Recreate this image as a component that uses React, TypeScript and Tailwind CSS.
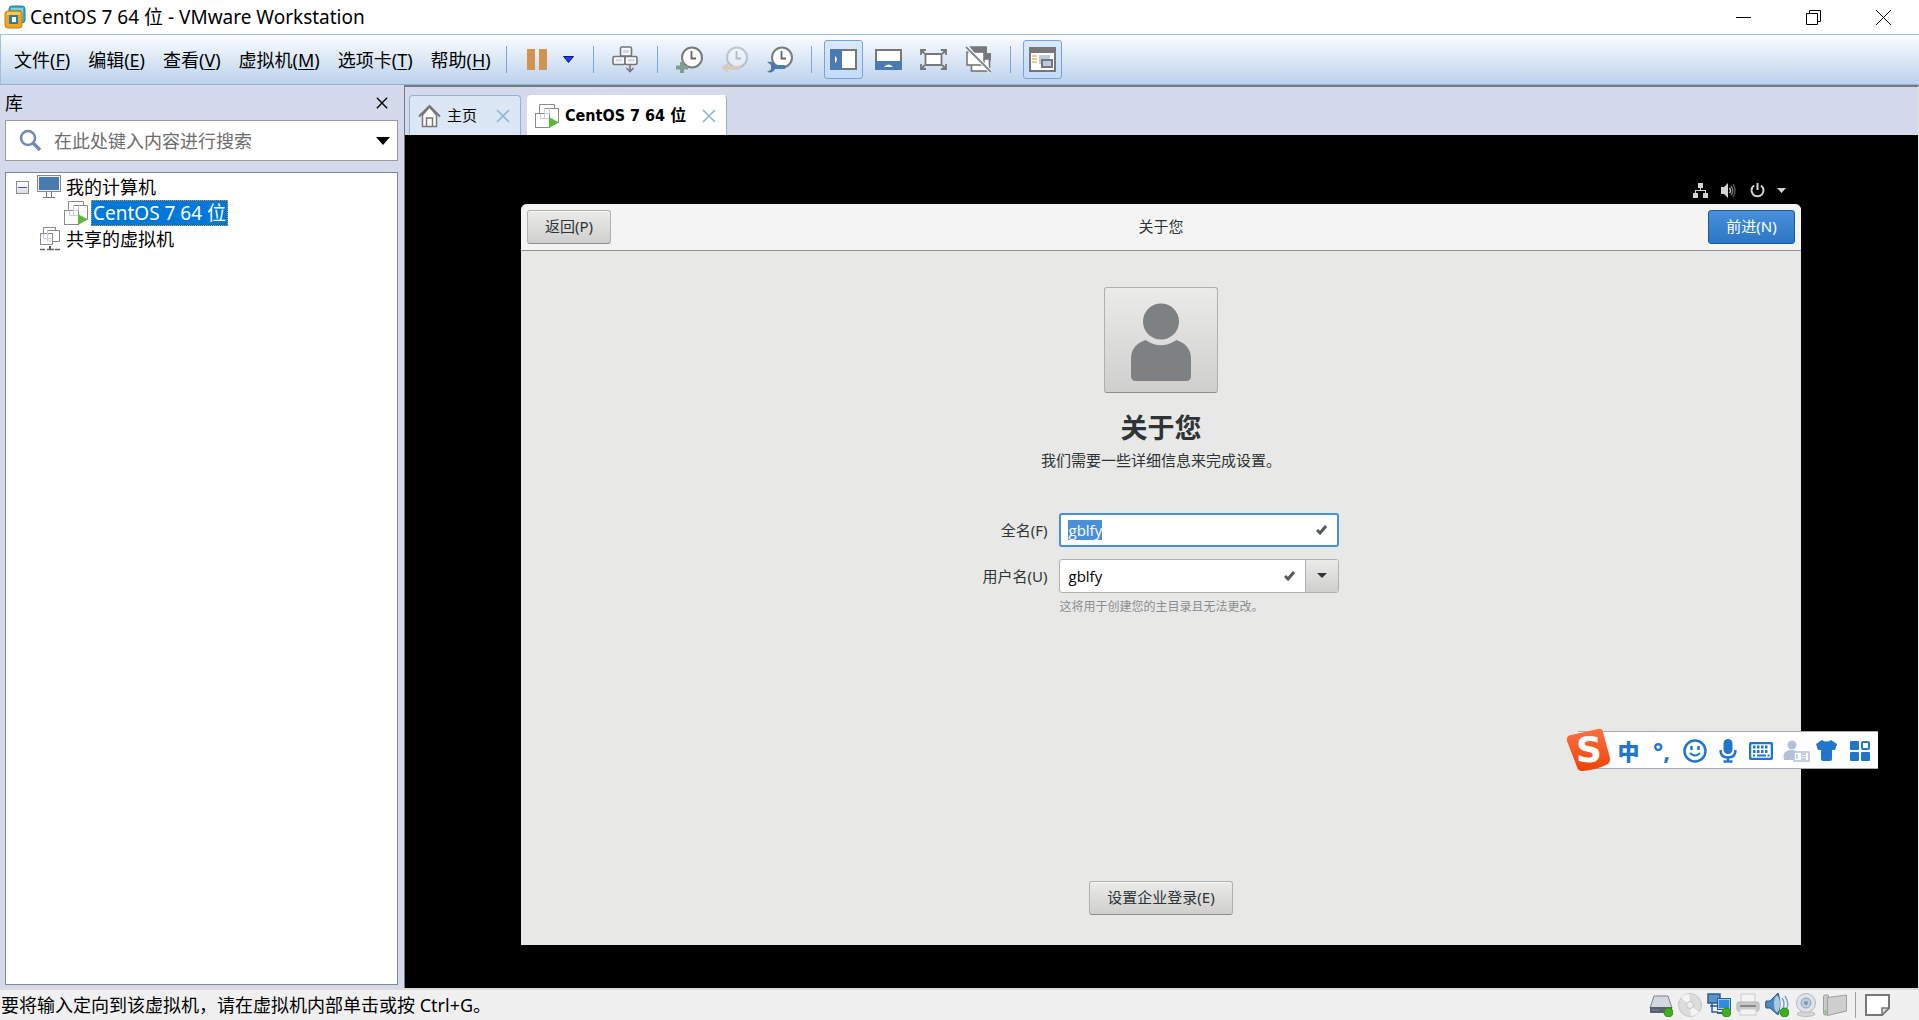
import { useEffect, useRef, useState } from 'react'
import type { ReactNode } from 'react'

interface MenuItem {
  label: string
  hotkey: string
}

const MENUS: MenuItem[] = [
  { label: '文件', hotkey: 'F' },
  { label: '编辑', hotkey: 'E' },
  { label: '查看', hotkey: 'V' },
  { label: '虚拟机', hotkey: 'M' },
  { label: '选项卡', hotkey: 'T' },
  { label: '帮助', hotkey: 'H' },
]

const guestButton =
  'h-[34px] rounded-[3px] border border-[#b0b0ac] border-b-[#8e8e8a] bg-linear-to-b from-[#ebebea] to-[#cfcfcd] pb-[2px] text-[15px] text-[#2e3436] shadow-[inset_0_1px_0_#f8f8f7]'

function AppLogo() {
  return (
    <svg width="22" height="24" viewBox="0 0 22 24">
      <rect x="5" y="1" width="16" height="17" rx="3" fill="#3fa9bf" stroke="#277f97" />
      <path d="M7 4h11v11" fill="none" stroke="#7fd0dd" strokeWidth="2" />
      <rect x="1" y="6" width="17" height="17" rx="3" fill="#f2a61f" stroke="#c97a10" />
      <rect x="3" y="7" width="13" height="3" fill="#fbc64a" />
      <rect x="5" y="10" width="9" height="9" fill="#2c7ea0" />
      <rect x="8" y="12" width="4" height="5" fill="#fff" />
    </svg>
  )
}

function VmStackIcon({ running = false }: { running?: boolean }) {
  return (
    <svg width="24" height="24" viewBox="0 0 24 24" fill="none" className="shrink-0">
      <path d="M4.500 9V.5h15v4M9.500 4.500h14v14h-8" stroke="#8a8a8a" />
      <rect x=".5" y="9.500" width="14" height="14" stroke="#8a8a8a" />
      <path d="M5.500 10v4.500h9M9.500 4.500v10M9.500 9.500h5M14.500 9.500v-5" stroke="#c6cfe4" />
      {running && <path d="M14 13v11l10-5.500z" fill="#5cb83c" />}
    </svg>
  )
}

function SharedIcon() {
  return (
    <svg width="20" height="24" viewBox="0 0 20 24" fill="none" className="shrink-0">
      <path d="M3.500 6.500v-6h12v3M7.500 3.500h12v11h-7" stroke="#8a8a8a" />
      <rect x=".5" y="6.500" width="12" height="11" stroke="#8a8a8a" />
      <path d="M3.500 7v4.500h9M7.500 4v10h5" stroke="#c6cfe4" />
      <path d="M10 19v3" stroke="#555" strokeWidth="2" />
      <path d="M0 22.500h5M7 22.500h7M15 22.500h5" stroke="#666" strokeWidth="1.500" />
    </svg>
  )
}

function MonitorIcon() {
  return (
    <svg width="24" height="24" viewBox="0 0 24 24" className="shrink-0">
      <rect x=".5" y=".5" width="23" height="16" fill="#eee" stroke="#8a8a8a" />
      <rect x="2" y="2" width="20" height="13" fill="#4a7bb0" />
      <path d="M9.500 17v5M14.500 17v5M6 22.500h12" stroke="#777" fill="none" />
    </svg>
  )
}

function HomeIcon() {
  return (
    <svg width="23" height="24" viewBox="0 0 23 24" fill="none">
      <path d="M4.500 11v11.500h14V11l-7-8z" fill="#fff" stroke="#777" strokeWidth="1.500" />
      <path d="M1 12.500L11.500 2 22 12.500" stroke="#777" strokeWidth="2" />
      <path d="M8.500 22v-8h6v8" stroke="#777" strokeWidth="1.500" />
    </svg>
  )
}

function CrossIcon({ size, color }: { size: number; color: string }) {
  return (
    <svg width={size} height={size} viewBox="0 0 14 14" stroke={color} strokeWidth="1.600">
      <path d="M1 1l12 12M13 1L1 13" />
    </svg>
  )
}

function Clock({ children, faded = false }: { children: ReactNode; faded?: boolean }) {
  return (
    <svg width="27" height="27" viewBox="0 0 27 27" fill="none">
      <g opacity={faded ? 0.35 : 1}>
        <circle cx="16" cy="11.500" r="10" fill="#fdfdfd" stroke="#7b7b7b" strokeWidth="2" />
        <path d="M15.500 5v7.500H20" stroke="#666" strokeWidth="1.800" />
      </g>
      {children}
    </svg>
  )
}

function CtrlAltDelIcon() {
  return (
    <svg width="26" height="27" viewBox="0 0 26 27" fill="none" stroke="#777" strokeWidth="1.600">
      <rect x="8.500" y="1" width="11" height="9" rx="1.500" fill="#f8f8f8" />
      <rect x="1" y="10.500" width="12" height="8" rx="1.500" fill="#f8f8f8" />
      <rect x="13" y="10.500" width="12" height="8" rx="1.500" fill="#f8f8f8" />
      <path d="M11 4h6v3h-6zM4 13h6v2.500H4zM16 13h6v2.500h-6z" fill="#c9d8ec" stroke="none" />
      <path d="M18 19v6M14.500 22l3.500 3.500 3.500-3.500" />
    </svg>
  )
}

function SidebarViewIcon() {
  return (
    <svg width="27" height="22" viewBox="0 0 27 22">
      <rect x="1" y="1" width="25" height="19" fill="#fff" stroke="#777" strokeWidth="2" />
      <rect width="12" height="21" fill="#4a7bb0" />
      <path d="M5 7q4 3.500 0 7z" fill="#fff" />
    </svg>
  )
}

function ThumbnailViewIcon() {
  return (
    <svg width="27" height="22" viewBox="0 0 27 22">
      <rect x="1" y="1" width="25" height="19" fill="#fff" stroke="#777" strokeWidth="2" />
      <rect y="12" width="27" height="9" fill="#4a7bb0" />
      <path d="M9 18q4.500-5 9 0z" fill="#fff" />
    </svg>
  )
}

function FullscreenIcon() {
  return (
    <svg width="27" height="22" viewBox="0 0 27 22" fill="none" stroke="#777" strokeWidth="1.800">
      <rect x="5.500" y="5" width="16" height="11" rx="1" fill="#fff" />
      <path d="M1 6V1h5M21 1h5v5M26 15v5h-5M6 20H1v-5M1 1l4 4M26 1l-4 4M26 20l-4-4M1 20l4-4" />
    </svg>
  )
}

function UnityIcon() {
  return (
    <svg width="27" height="27" viewBox="0 0 27 27" fill="none" stroke="#777" strokeWidth="1.600">
      <path d="M6 2h15v12M20 8h5v7" fill="none" />
      <path d="M6 1h15v5H10z" fill="#777" />
      <path d="M20 8h5v4h-5z" fill="#777" />
      <rect x="6.500" y="13" width="18" height="12" fill="#fff" />
      <rect x="2" y="6" width="17" height="13" fill="#fff" />
      <path d="M1 1l25 25" stroke="#fff" strokeWidth="4" />
      <path d="M1 1l25 25" stroke="#7f8a99" strokeWidth="2" />
    </svg>
  )
}

function ConsoleIcon() {
  return (
    <svg width="27" height="25" viewBox="0 0 27 25">
      <rect x="1" y="1" width="25" height="23" fill="#fff" stroke="#777" strokeWidth="2" />
      <rect width="27" height="6" fill="#777" />
      <path d="M3 9h5M3 12h5M3 15h5" stroke="#e3b95c" strokeWidth="1.500" />
      <rect x="10" y="8" width="11" height="9" fill="#bccbe0" />
      <rect x="13" y="13" width="10" height="7" fill="#bccbe0" stroke="#777" strokeWidth="2" />
    </svg>
  )
}

function ToolButton({ label, active = false, children }: { label: string; active?: boolean; children: ReactNode }) {
  return (
    <button
      aria-label={label}
      className={
        active
          ? 'flex size-[39px] items-center justify-center rounded-[3px] border border-[#78a3d8] bg-linear-to-b from-[#d9e9fb] to-[#c3dbfb]'
          : 'flex size-[39px] items-center justify-center'
      }
    >
      {children}
    </button>
  )
}

function Separator() {
  return <div className="h-[27px] w-px bg-[#7fa6d6]" />
}

function TitleBar() {
  return (
    <header className="flex h-[34px] shrink-0 items-center bg-white pr-px pl-1">
      <AppLogo />
      <h1 className="flex-1 pl-1 text-[19px] leading-6">CentOS 7 64 位 - VMware Workstation</h1>
      <button aria-label="最小化" className="flex h-full w-[69px] items-center justify-center">
        <svg width="15" height="15" viewBox="0 0 15 15" stroke="#000">
          <path d="M0 7.500h15" />
        </svg>
      </button>
      <button aria-label="还原" className="flex h-full w-[70px] items-center justify-center">
        <svg width="15" height="15" viewBox="0 0 15 15" stroke="#000" fill="none">
          <path d="M.5 3.500h11v11H.5zM3.500 3V.5h11v11H12" />
        </svg>
      </button>
      <button aria-label="关闭" className="flex h-full w-[70px] items-center justify-center">
        <svg width="15" height="15" viewBox="0 0 15 15" stroke="#000">
          <path d="M0 0l15 15M15 0L0 15" />
        </svg>
      </button>
    </header>
  )
}

function Toolbar() {
  return (
    <div className="flex h-[51px] shrink-0 items-center border-y border-l border-t-[#9fc0e4] border-b-[#8fb2dc] border-l-[#9fc0e4] bg-linear-to-b from-[#fbfdff] to-[#bcd2ec] pl-[13px]">
      <nav className="flex gap-[18px] text-lg leading-6 whitespace-nowrap">
        {MENUS.map((menu) => (
          <button key={menu.hotkey}>
            {menu.label}(<span className="underline underline-offset-2">{menu.hotkey}</span>)
          </button>
        ))}
      </nav>
      <div className="flex items-center pl-[15px]">
        <Separator />
        <button aria-label="挂起" className="ml-5 flex gap-1">
          <span className="h-[21px] w-2 bg-[#d3924f]" />
          <span className="h-[21px] w-2 bg-[#d3924f]" />
        </button>
        <button aria-label="电源选项" className="mx-4">
          <svg width="11" height="7" viewBox="0 0 11 7">
            <path d="M.5.500h10L5.500 6.500z" fill="#1d3df5" stroke="#0b1a70" />
          </svg>
        </button>
        <div className="ml-[3px]">
          <Separator />
        </div>
        <div className="mx-3">
          <ToolButton label="发送 Ctrl+Alt+Del">
            <CtrlAltDelIcon />
          </ToolButton>
        </div>
        <Separator />
        <div className="mx-3 flex gap-[6px]">
          <ToolButton label="拍摄快照">
            <Clock>
              <path d="M6 16v11M0 21.500h12" stroke="#7f9f8f" strokeWidth="4" />
            </Clock>
          </ToolButton>
          <ToolButton label="恢复快照">
            <Clock faded>
              <path d="M0 21.500l7-5v3.500h12v4H7v3z" fill="#d9cbbb" />
            </Clock>
          </ToolButton>
          <ToolButton label="管理快照">
            <Clock>
              <path d="M1 16q6-1.500 8 3h9q2 0 2 2t-2 2H9q-2 4.500-8 3l4-2.500v-4.500z" fill="#4a7bb0" />
            </Clock>
          </ToolButton>
        </div>
        <Separator />
        <div className="mx-3 flex gap-[6px]">
          <ToolButton label="显示库" active>
            <SidebarViewIcon />
          </ToolButton>
          <ToolButton label="显示缩略图">
            <ThumbnailViewIcon />
          </ToolButton>
          <ToolButton label="全屏">
            <FullscreenIcon />
          </ToolButton>
          <ToolButton label="Unity">
            <UnityIcon />
          </ToolButton>
        </div>
        <Separator />
        <div className="mx-3">
          <ToolButton label="控制台视图" active>
            <ConsoleIcon />
          </ToolButton>
        </div>
      </div>
    </div>
  )
}

function Library() {
  return (
    <aside className="flex w-[404px] shrink-0 flex-col bg-[#d4d9ec] pr-[6px] pb-[3px] pl-[5px]">
      <div className="flex h-[35px] items-center justify-between pr-[10px]">
        <h2 className="text-lg leading-6">库</h2>
        <button aria-label="关闭库">
          <CrossIcon size={12} color="#000" />
        </button>
      </div>
      <div className="flex h-[41px] items-center border border-[#9b9b9b] bg-white pr-[7px] pl-[13px]">
        <svg width="23" height="23" viewBox="0 0 23 23" fill="none" stroke="#7389b5">
          <circle cx="9" cy="9" r="7" strokeWidth="2.500" />
          <path d="M14 14l7 7" strokeWidth="3.500" />
        </svg>
        <input
          type="text"
          aria-label="搜索"
          placeholder="在此处键入内容进行搜索"
          className="min-w-0 flex-1 pl-3 text-lg leading-6 outline-none placeholder:text-[#6d6d6d]"
        />
        <button aria-label="搜索选项">
          <svg width="14" height="8" viewBox="0 0 14 8">
            <path d="M0 0h14L7 8z" />
          </svg>
        </button>
      </div>
      <ul className="mt-[11px] flex-1 border border-[#84878f] bg-white pt-px text-lg leading-6">
        <li className="flex h-[26px] items-center pl-[10px]">
          <button aria-label="折叠" className="flex size-[13px] items-center justify-center border border-[#8e8e8e] bg-linear-to-b from-white to-[#dcdcdc]">
            <span className="h-px w-[9px] bg-[#3b55b0]" />
          </button>
          <span className="pr-[5px] pl-2">
            <MonitorIcon />
          </span>
          我的计算机
        </li>
        <li className="flex h-[26px] items-center gap-[3px] pl-[58px]">
          <VmStackIcon running />
          <span className="h-[26px] border border-dotted border-[#f08a28] bg-[#0078d7] px-px text-[19px] text-white">CentOS 7 64 位</span>
        </li>
        <li className="flex h-[26px] items-center gap-[6px] pl-[34px]">
          <SharedIcon />
          共享的虚拟机
        </li>
      </ul>
    </aside>
  )
}

function Tabs() {
  return (
    <div className="flex h-[48px] shrink-0 items-end gap-[6px] bg-[#d4d9ec] pl-1 font-['DejaVu_Sans_Condensed','Noto_Sans_CJK_SC',sans-serif]">
      <div className="flex h-10 w-[112px] items-center rounded-t-[4px] border border-b-0 border-[#8fb3d6] bg-[#dbe7f5] pr-[10px] pl-2">
        <HomeIcon />
        <button className="flex-1 pt-px pl-[6px] text-left text-[15px]">主页</button>
        <button aria-label="关闭主页">
          <CrossIcon size={14} color="#8fb3d0" />
        </button>
      </div>
      <div className="flex h-10 w-[200px] items-center rounded-t-[4px] border border-b-0 border-t-white border-r-[#8fb3d6] border-l-white bg-white pr-[10px] pl-[7px]">
        <VmStackIcon running />
        <button className="flex-1 pt-px pl-[6px] text-left text-base font-bold whitespace-nowrap">CentOS 7 64 位</button>
        <button aria-label="关闭 CentOS 7">
          <CrossIcon size={14} color="#8fb3d0" />
        </button>
      </div>
    </div>
  )
}

function CheckMark() {
  return (
    <svg width="11" height="10" viewBox="0 0 11 10" fill="none" stroke="#555a5a" strokeWidth="3">
      <path d="M1 5l3 3 6-7" />
    </svg>
  )
}

function GuestTopBar() {
  return (
    <div className="flex h-[27px] shrink-0 items-center justify-end pr-[15px] text-[#d3d3d3]">
      <svg width="15" height="15" viewBox="0 0 15 15" fill="currentColor">
        <path d="M5 0h5v5H5zM0 10h5v5H0zM10 10h5v5h-5zM7 5h1v2h5v3h-1V8H3v2H2V7h5z" />
      </svg>
      <svg width="15" height="15" viewBox="0 0 15 15" className="ml-[13px]" fill="none">
        <path d="M0 4h3l4-4v15l-4-4H0z" fill="currentColor" />
        <path d="M8.500 5q2 2.500 0 5" stroke="#bbb" strokeWidth="1.500" />
        <path d="M10 3q3.500 4.500 0 9" stroke="#777" strokeWidth="1.500" />
        <path d="M12 1q4 6.500 0 13" stroke="#555" strokeWidth="1.500" />
      </svg>
      <svg width="15" height="15" viewBox="0 0 15 15" className="ml-[14px]" fill="none" stroke="currentColor" strokeWidth="2">
        <path d="M4 2.500a6 6 0 1 0 7 0M7.500 0v7" />
      </svg>
      <svg width="9" height="5" viewBox="0 0 9 5" className="ml-[12px]" fill="currentColor">
        <path d="M0 0h9L4.500 5z" />
      </svg>
    </div>
  )
}

function GuestSetup() {
  const [fullName, setFullName] = useState('gblfy')
  const [userName, setUserName] = useState('gblfy')
  const fullNameRef = useRef<HTMLInputElement>(null)

  useEffect(() => {
    fullNameRef.current?.focus()
    fullNameRef.current?.select()
  }, [])

  return (
    <div className="flex min-h-0 flex-1 flex-col overflow-hidden rounded-t-[6px] bg-[#e8e8e6] text-[15px] leading-5 text-[#2e3436]">
      <div className="grid h-[47px] shrink-0 grid-cols-3 items-center border-b border-[#8f8f8b] bg-[#f4f4f4] px-[6px]">
        <button className={`${guestButton} w-[84px] justify-self-start`}>返回(P)</button>
        <h2 className="pb-[2px] text-center">关于您</h2>
        <button className="h-[34px] w-[87px] justify-self-end rounded-[3px] border border-[#1c5a9f] bg-linear-to-b from-[#4a90d9] to-[#2a76c6] pb-[2px] text-white">
          前进(N)
        </button>
      </div>
      <div className="flex flex-1 flex-col items-center pt-9 pb-[30px]">
        <button
          aria-label="选择头像"
          className="flex h-[106px] w-[114px] items-center justify-center rounded-[3px] border border-[#b0b0ac] border-b-[#8e8e8a] bg-linear-to-b from-[#ebebea] to-[#cfcfcd] pt-[6px]"
        >
          <svg width="60" height="79" viewBox="0 0 60 79" fill="#7d8181">
            <circle cx="30" cy="18.500" r="18" />
            <path d="M14.500 37q15.500 10.500 31 0Q60 42 60 56v17q0 5-5 5H5q-5 0-5-5V56q0-14 14.500-19z" />
          </svg>
        </button>
        <h2 className="mt-[17px] text-[27px] leading-9 font-bold">关于您</h2>
        <p className="mt-1">我们需要一些详细信息来完成设置。</p>
        <form className="mt-[43px] grid grid-cols-[auto_280px] items-center gap-x-3">
          <label htmlFor="full-name" className="text-right">
            全名(F)
          </label>
          <div className="flex h-[34px] items-center rounded-[3px] border-2 border-[#4a90d9] bg-white pr-[10px] pl-[7px]">
            <input
              id="full-name"
              ref={fullNameRef}
              value={fullName}
              onChange={(e) => setFullName(e.target.value)}
              className="min-w-0 flex-1 font-['Open_Sans',sans-serif] caret-transparent outline-none selection:bg-[#4a90d9] selection:text-white"
            />
            <CheckMark />
          </div>
          <label htmlFor="user-name" className="mt-3 text-right">
            用户名(U)
          </label>
          <div className="mt-3 flex h-[34px] overflow-hidden rounded-[3px] border border-[#b0b0ac] bg-white">
            <input
              id="user-name"
              value={userName}
              onChange={(e) => setUserName(e.target.value)}
              className="min-w-0 flex-1 pl-2 font-['Open_Sans',sans-serif] text-black outline-none"
            />
            <span className="flex items-center pr-[10px]">
              <CheckMark />
            </span>
            <button
              type="button"
              aria-label="用户名建议"
              className="flex w-[33px] items-center justify-center border-l border-[#b0b0ac] bg-linear-to-b from-[#ebebea] to-[#cfcfcd]"
            >
              <svg width="10" height="5" viewBox="0 0 10 5" fill="#2e3436">
                <path d="M0 0h10L5 5z" />
              </svg>
            </button>
          </div>
          <p className="col-start-2 mt-[5px] text-xs leading-[18px] text-[#8b8e8f]">这将用于创建您的主目录且无法更改。</p>
        </form>
        <button className={`${guestButton} mt-auto w-[144px]`}>设置企业登录(E)</button>
      </div>
    </div>
  )
}

function ImeCell({ label, children }: { label: string; children: ReactNode }) {
  return (
    <button aria-label={label} className="flex w-[33px] items-center justify-center">
      {children}
    </button>
  )
}

// floating input method bar, sits above every window
function ImeBar() {
  return (
    <div className="absolute right-[41px] bottom-[251px] flex h-[38px] border-y border-[#a9a9b3] bg-white pt-px pr-[2px] pl-[34px] text-[#2176c9]">
      <div className="absolute -top-1 -left-3 h-11 w-[46px]">
        <svg width="46" height="44" viewBox="0 0 46 44" className="absolute">
          <defs>
            <linearGradient id="ime-logo" x1="0" y1="0" x2="0" y2="1">
              <stop offset="0" stopColor="#fb7042" />
              <stop offset="1" stopColor="#ef4309" />
            </linearGradient>
          </defs>
          <path d="M5 7L32 1q4-1 5 3l7 26q1 5-4 7-10 5-24 6-4 0-5-4L1 13q-1-5 4-6z" fill="url(#ime-logo)" />
        </svg>
        <span className="relative flex h-11 items-center justify-center font-['DejaVu_Sans',sans-serif] text-4xl leading-[44px] font-bold text-white">
          S
        </span>
      </div>
      <ImeCell label="中英文切换">
        <span className="text-[22px] leading-6 font-black">中</span>
      </ImeCell>
      <ImeCell label="标点">
        <span className="text-2xl leading-6 font-bold">°,</span>
      </ImeCell>
      <ImeCell label="表情">
        <svg width="24" height="24" viewBox="0 0 24 24" fill="none" stroke="currentColor" strokeWidth="2.500">
          <circle cx="12" cy="12" r="10.500" />
          <path d="M8.500 7v4M15.500 7v4" />
          <path d="M7 14q5 5 10 0" strokeWidth="2" />
        </svg>
      </ImeCell>
      <ImeCell label="语音">
        <svg width="18" height="24" viewBox="0 0 18 24" fill="none" stroke="currentColor" strokeWidth="2.500">
          <rect x="4.500" y="0" width="9" height="15" rx="4.500" fill="currentColor" stroke="none" />
          <path d="M1.500 11q0 7.500 7.500 7.500t7.500-7.500M9 18v4M4.500 22.500h9" />
        </svg>
      </ImeCell>
      <ImeCell label="软键盘">
        <svg width="24" height="18" viewBox="0 0 24 18" fill="none" stroke="currentColor">
          <rect x="1" y="1" width="22" height="16" rx="2" strokeWidth="2.500" />
          <path d="M4 5h16M4 9.500h16" strokeWidth="3" strokeDasharray="2.500 1.500" />
          <path d="M4 13.500h2M8 13.500h9M18.500 13.500h2" strokeWidth="2" />
        </svg>
      </ImeCell>
      <ImeCell label="账户">
        <svg width="33" height="22" viewBox="-6 0 33 22" fill="#b4c1d9" className="shrink-0">
          <circle cx="9" cy="5" r="4.500" />
          <path d="M1 20q-2-7 3-9 5-2 9 0v9z" />
          <rect x="11" y="12" width="15" height="9" fill="#fff" stroke="#b4c1d9" strokeWidth="1.500" />
          <path d="M14 14v5M18 14h5M18 16.500h5M18 19h5" stroke="#b4c1d9" strokeWidth="1.500" />
        </svg>
      </ImeCell>
      <ImeCell label="皮肤">
        <svg width="21" height="21" viewBox="0 0 21 21" fill="currentColor">
          <path d="M6 0q4.500 3 9 0l6 4-2 6h-3v9q0 2-2 2H7q-2 0-2-2v-9H2L0 4z" />
        </svg>
      </ImeCell>
      <ImeCell label="工具箱">
        <svg width="20" height="20" viewBox="0 0 20 20" fill="currentColor">
          <rect width="9" height="9" rx="1" />
          <rect x="12" y="1" width="7" height="7" rx="1" fill="none" stroke="currentColor" strokeWidth="2" />
          <rect y="11" width="9" height="9" rx="1" />
          <rect x="11" y="11" width="9" height="9" rx="1" />
        </svg>
      </ImeCell>
    </div>
  )
}

function DeviceIcons() {
  const dot = <circle cx="19.500" cy="19.500" r="4.500" fill="#3faf1f" stroke="#2a8a12" />
  return (
    <div className="flex items-center gap-[5px]">
      <svg width="24" height="24" viewBox="0 0 24 24">
        <path d="M5 3h14l4 12H1z" fill="#d3d8df" stroke="#7c848f" />
        <path d="M1 14h22v6H1z" fill="#59616e" />
        <path d="M3 17h7" stroke="#8d97a6" strokeDasharray="2 1" />
        {dot}
      </svg>
      <svg width="24" height="24" viewBox="0 0 24 24">
        <circle cx="12" cy="12" r="11.500" fill="#dcdcdc" stroke="#c4c4c4" />
        <path d="M12 12L3 5q3-4 8-4zM12 12l9 7q-3 4-8 4z" fill="#f4f4f4" />
        <circle cx="12" cy="12" r="3.500" fill="#eee" stroke="#c4c4c4" />
      </svg>
      <svg width="24" height="24" viewBox="0 0 24 24">
        <rect x="1" y="1" width="12" height="9" fill="#5a93c4" stroke="#2b5f8f" strokeWidth="1.500" />
        <path d="M5 10v9h6M3 13h7" fill="none" stroke="#2b5f8f" strokeWidth="1.500" />
        <rect x="11" y="6" width="12" height="10" fill="#2f8ae0" stroke="#fff" />
        <rect x="10.500" y="5.500" width="13" height="11" fill="none" stroke="#2b5f8f" />
        <path d="M10 20h8" stroke="#2b5f8f" strokeWidth="2" />
        {dot}
      </svg>
      <svg width="24" height="24" viewBox="0 0 24 24">
        <rect x="5" y="1" width="14" height="10" fill="#f4f4f4" stroke="#ccc" />
        <rect x="1" y="9" width="22" height="9" rx="2" fill="#c9c9c9" stroke="#b3b3b3" />
        <path d="M4 13h16" stroke="#888" strokeWidth="2" />
        <rect x="4" y="16" width="16" height="6" fill="#f2f2f2" stroke="#ccc" />
      </svg>
      <svg width="24" height="24" viewBox="0 0 24 24">
        <path d="M1 8h4l8-8q4 11 0 22l-8-7H1q-1-3 0-7z" fill="#4f87bf" stroke="#2a5480" />
        <ellipse cx="12" cy="11" rx="3" ry="8" fill="#a9cbe8" />
        <path d="M17 5q4 6 0 12M20 3q5 8 1 14" stroke="#7da6cc" fill="none" strokeWidth="1.500" />
        {dot}
      </svg>
      <svg width="24" height="24" viewBox="0 0 24 24">
        <ellipse cx="12" cy="21" rx="9" ry="2.500" fill="#d6d6d6" stroke="#bbb" />
        <circle cx="12" cy="10" r="9.500" fill="#dfe2e6" stroke="#b3b8bf" />
        <circle cx="12" cy="10" r="5" fill="#b9cde0" stroke="#8fa5ba" />
        <circle cx="12" cy="10" r="2" fill="#7d99b3" />
      </svg>
      <svg width="24" height="24" viewBox="0 0 24 24">
        <path d="M.5 3.500q0-1.500 1.500-1.500h3l1 3v17H2q-1.500 0-1.500-1.500z" fill="#c9c9c9" stroke="#9f9f9f" />
        <path d="M4.500 4.500L23.500 2v16L4.500 22.500z" fill="#cfcfcf" stroke="#9f9f9f" />
        <path d="M2.500 17v4" stroke="#86c873" strokeWidth="2" />
      </svg>
    </div>
  )
}

function StatusBar() {
  return (
    <footer className="flex h-8 shrink-0 items-center border-t-2 border-[#dcdcdc] bg-[#f0f0f0] pr-[29px] pl-px">
      <p className="flex-1 text-lg leading-6">要将输入定向到该虚拟机，请在虚拟机内部单击或按 Ctrl+G。</p>
      <DeviceIcons />
      <div className="mr-[9px] ml-2 h-[26px] w-px bg-[#a0a0a0]" />
      <button aria-label="消息日志">
        <svg width="25" height="22" viewBox="0 0 25 22" fill="#fff" stroke="#777" strokeWidth="2">
          <path d="M1 1h23v13l-7 7H1z" />
          <path d="M24 14h-7v7z" fill="#ddd" strokeWidth="1.500" />
        </svg>
      </button>
    </footer>
  )
}

export default function App() {
  return (
    <div className="relative flex h-screen flex-col overflow-hidden bg-[#f0f0f0] font-['Noto_Sans','Noto_Sans_CJK_SC',sans-serif] text-black">
      <TitleBar />
      <Toolbar />
      <div className="flex min-h-0 flex-1">
        <Library />
        <main className="flex min-w-0 flex-1 flex-col border-t-2 border-r border-l border-t-[#77797d] border-r-[#e3e3e3] border-l-[#77797d]">
          <Tabs />
          <div className="flex min-h-0 flex-1 items-center justify-center bg-black pr-px pb-[2px]">
            <div className="flex h-full max-h-[768px] w-full max-w-[1280px] flex-col">
              <GuestTopBar />
              <GuestSetup />
            </div>
          </div>
        </main>
      </div>
      <StatusBar />
      <ImeBar />
    </div>
  )
}
